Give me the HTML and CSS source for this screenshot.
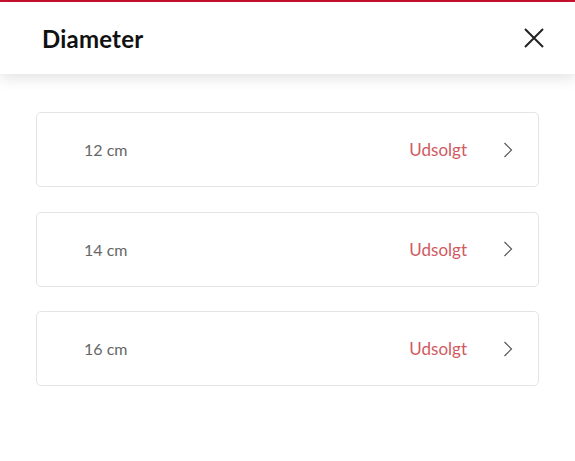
FILE: index.html
```html
<!DOCTYPE html>
<html lang="da">
<head>
<meta charset="utf-8">
<link rel="stylesheet" href="styles.css">
</head>
<body>
<div class="modal">
  <header class="header">
    <h1 class="title">Diameter</h1>
    <button class="close" aria-label="Luk">
      <svg width="20" height="20" viewBox="0 0 20 20"><path d="M1 1 L19 19 M19 1 L1 19" stroke="#222" stroke-width="2" fill="none"/></svg>
    </button>
  </header>
  <ul class="list">
    <li class="item"><span class="label">12 cm</span><span class="status">Udsolgt</span><svg class="chev" width="10" height="16" viewBox="0 0 10 16"><path d="M1.5 1 L8.5 8 L1.5 15" stroke="#555" stroke-width="1.2" fill="none"/></svg></li>
    <li class="item"><span class="label">14 cm</span><span class="status">Udsolgt</span><svg class="chev" width="10" height="16" viewBox="0 0 10 16"><path d="M1.5 1 L8.5 8 L1.5 15" stroke="#555" stroke-width="1.2" fill="none"/></svg></li>
    <li class="item"><span class="label">16 cm</span><span class="status">Udsolgt</span><svg class="chev" width="10" height="16" viewBox="0 0 10 16"><path d="M1.5 1 L8.5 8 L1.5 15" stroke="#555" stroke-width="1.2" fill="none"/></svg></li>
  </ul>
</div>
</body>
</html>
```
FILE: styles.css
```css
* { box-sizing: border-box; }
html, body { margin: 0; padding: 0; background: #fff; }
body { font-family: Lato, "Noto Sans", sans-serif; width: 575px; height: 461px; overflow: hidden; }
.modal { border-top: 2px solid #c8102e; }
.header {
  height: 72px;
  display: flex;
  align-items: center;
  justify-content: space-between;
  padding: 0 31px 0 42px;
  background: #fff;
  box-shadow: 0 4px 14px rgba(0,0,0,0.12);
  position: relative;
}
.title { margin: 0; font-size: 24px; font-weight: 700; color: #111; letter-spacing: 0.2px; }
.close { background: none; border: 0; padding: 0; width: 20px; height: 20px; display: flex; }
.list { list-style: none; margin: 0; padding: 38px 36px 0 36px; display: flex; flex-direction: column; gap: 24.5px; }
.item {
  height: 75px;
  border: 1px solid #e4e4e4;
  border-radius: 5px;
  display: flex;
  align-items: center;
  padding: 0 25px 0 47px;
}
.label { flex: 1; font-size: 16px; color: #666; }
.status { font-size: 17px; color: #d05a5e; margin-right: 36px; }
.chev { display: block; }
```
